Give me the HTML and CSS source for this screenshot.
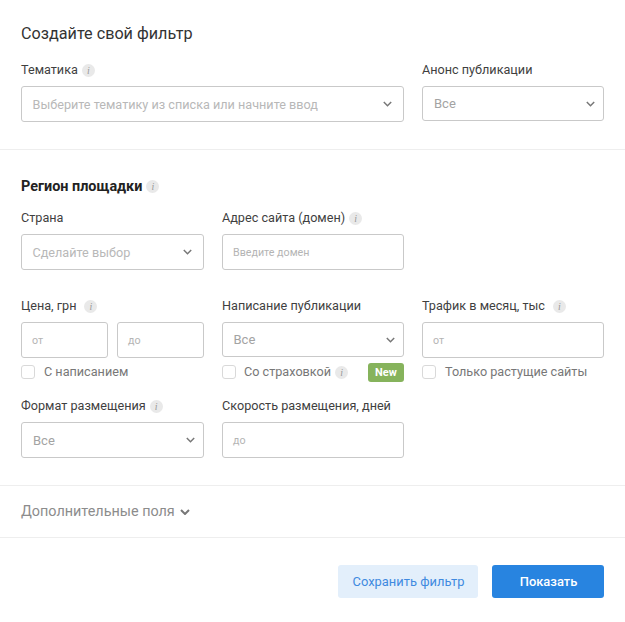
FILE: index.html
```html
<!DOCTYPE html>
<html lang="ru">
<head>
<meta charset="utf-8">
<title>Создайте свой фильтр</title>
<link rel="stylesheet" href="styles.css">
</head>
<body>
<svg class="sprite" width="0" height="0" aria-hidden="true">
  <symbol id="chev" viewBox="0 0 9 6"><path d="M.8 1l3.7 3.7L8.2 1" fill="none" stroke="currentColor" stroke-width="1.5"/></symbol>
  <symbol id="chev-bold" viewBox="0 0 10 6"><path d="M1 1l4 4 4-4" fill="none" stroke="currentColor" stroke-width="2"/></symbol>
</svg>
<form class="filter">
  <section class="block block-top">
    <h1 class="title">Создайте свой фильтр</h1>
    <div class="grid">
      <div class="field span2">
        <div class="label">Тематика <i class="info">i</i></div>
        <div class="control select"><span class="ph">Выберите тематику из списка или начните ввод</span><svg class="chev"><use href="#chev"/></svg></div>
      </div>
      <div class="field">
        <div class="label">Анонс публикации</div>
        <div class="control select tight short"><span class="val">Все</span><svg class="chev"><use href="#chev"/></svg></div>
      </div>
    </div>
  </section>
  <section class="block block-main">
    <h2 class="subtitle">Регион площадки <i class="info">i</i></h2>
    <div class="grid row-country">
      <div class="field">
        <div class="label">Страна</div>
        <div class="control select"><span class="ph">Сделайте выбор</span><svg class="chev"><use href="#chev"/></svg></div>
      </div>
      <div class="field">
        <div class="label">Адрес сайта (домен) <i class="info">i</i></div>
        <div class="control"><span class="ph-small">Введите домен</span></div>
      </div>
    </div>
    <div class="grid row-price">
      <div class="field">
        <div class="label">Цена, грн <i class="info info-far">i</i></div>
        <div class="pair">
          <div class="control"><span class="ph-small">от</span></div>
          <div class="control"><span class="ph-small">до</span></div>
        </div>
        <div class="check"><span class="box"></span><span class="check-text">С написанием</span></div>
      </div>
      <div class="field">
        <div class="label">Написание публикации</div>
        <div class="control select tight short"><span class="val val-mid">Все</span><svg class="chev"><use href="#chev"/></svg></div>
        <div class="check check-after-short"><span class="box"></span><span class="check-text">Со страховкой</span> <i class="info">i</i><span class="badge">New</span></div>
      </div>
      <div class="field">
        <div class="label">Трафик в месяц, тыс <i class="info info-far">i</i></div>
        <div class="control"><span class="ph-small">от</span></div>
        <div class="check"><span class="box"></span><span class="check-text">Только растущие сайты</span></div>
      </div>
    </div>
    <div class="grid row-format">
      <div class="field">
        <div class="label">Формат размещения <i class="info">i</i></div>
        <div class="control select tight"><span class="val">Все</span><svg class="chev"><use href="#chev"/></svg></div>
      </div>
      <div class="field">
        <div class="label">Скорость размещения, дней</div>
        <div class="control"><span class="ph-small">до</span></div>
      </div>
    </div>
  </section>
  <section class="extra"><span class="extra-text">Дополнительные поля</span> <svg class="chev-extra"><use href="#chev-bold"/></svg></section>
  <footer class="actions">
    <button type="button" class="btn btn-soft">Сохранить фильтр</button>
    <button type="button" class="btn btn-primary">Показать</button>
  </footer>
</form>
</body>
</html>
```
FILE: styles.css
```css
* { box-sizing: border-box; }
html, body { margin: 0; padding: 0; background: #fff; }
body { font-family: Roboto, "Noto Sans", sans-serif; color: #333; font-size: 13px; }
.sprite { position: absolute; }
.filter { width: 625px; height: 622px; }
.block { padding-left: 21px; padding-right: 21px; border-bottom: 1px solid #eeeeee; }
.block-top { height: 150px; padding-top: 24px; }
.block-main { height: 336px; padding-top: 28px; }
.title { margin: 0 0 19px; font-size: 16.2px; line-height: 19px; font-weight: 400; color: #333; }
.subtitle { margin: 0 0 15px; font-size: 14.4px; line-height: 17px; font-weight: 700; color: #222; display: flex; align-items: center; gap: 4px; }
.grid { display: grid; grid-template-columns: 183px 182px 182px; column-gap: 18px; }
.span2 { grid-column: span 2; }
.row-country { height: 70px; margin-bottom: 18px; }
.row-price { height: 82px; margin-bottom: 18px; }
.label { height: 16px; line-height: 16px; margin-bottom: 8px; font-size: 12.65px; color: #3f3f3f; display: flex; align-items: center; gap: 4px; white-space: nowrap; }
.info { display: inline-block; width: 13px; height: 13px; flex: none; border-radius: 50%; background: #e9e9e9; color: #999; font: italic 10px/13px "Liberation Serif", serif; text-align: center; }
.info-far { margin-left: 4px; }
.control { height: 36px; border: 1px solid #c9c9c9; border-radius: 3px; background: #fff; display: flex; align-items: center; padding: 0 11px; }
.select { justify-content: space-between; }
.short { height: 35px; }
.ph { font-size: 12.65px; color: #b8b8b8; white-space: nowrap; margin-left: -0.5px; }
.val { font-size: 13px; color: #a3a3a3; }
.val-mid { margin-left: -0.5px; }
.ph-small { font-size: 10.7px; color: #b4b4b4; margin-top: 1px; margin-left: -1px; }
.chev { width: 9px; height: 6px; color: #777; flex: none; }
.tight { padding-right: 8px; }
.pair { display: grid; grid-template-columns: 87px 87px; column-gap: 9px; }
.check { height: 14px; margin-top: 7px; display: flex; align-items: center; color: #777; font-size: 12.65px; white-space: nowrap; }
.check-after-short { margin-top: 8px; }
.check-after-short .box { margin-right: 8px; }
.check-text { margin-top: -2px; }
.box { width: 14px; height: 14px; flex: none; border: 1px solid #d9d9d9; border-radius: 3px; margin-right: 9px; background: #fff; }
.check .info { margin-left: 4px; }
.badge { margin-left: auto; width: 36px; height: 19px; border-radius: 3px; background: #86b35c; color: #fff; font-size: 11px; font-weight: 700; line-height: 19px; text-align: center; }
.extra { height: 52px; padding: 0 21px; border-bottom: 1px solid #eeeeee; display: flex; align-items: center; gap: 5px; font-size: 14.4px; color: #8c8c8c; }
.extra-text { margin-top: -1px; }
.chev-extra { width: 10px; height: 6px; color: #777; }
.actions { display: flex; justify-content: flex-end; gap: 14px; padding: 27px 21px 0; }
.btn { height: 33px; border: 0; border-radius: 3px; font-family: inherit; font-size: 12.9px; padding: 0 0 0 1px; }
.btn-soft { width: 140px; background: #e3effb; color: #3f8ae0; }
.btn-primary { width: 112px; background: #2884e0; color: #fff; font-weight: 500; }
```
